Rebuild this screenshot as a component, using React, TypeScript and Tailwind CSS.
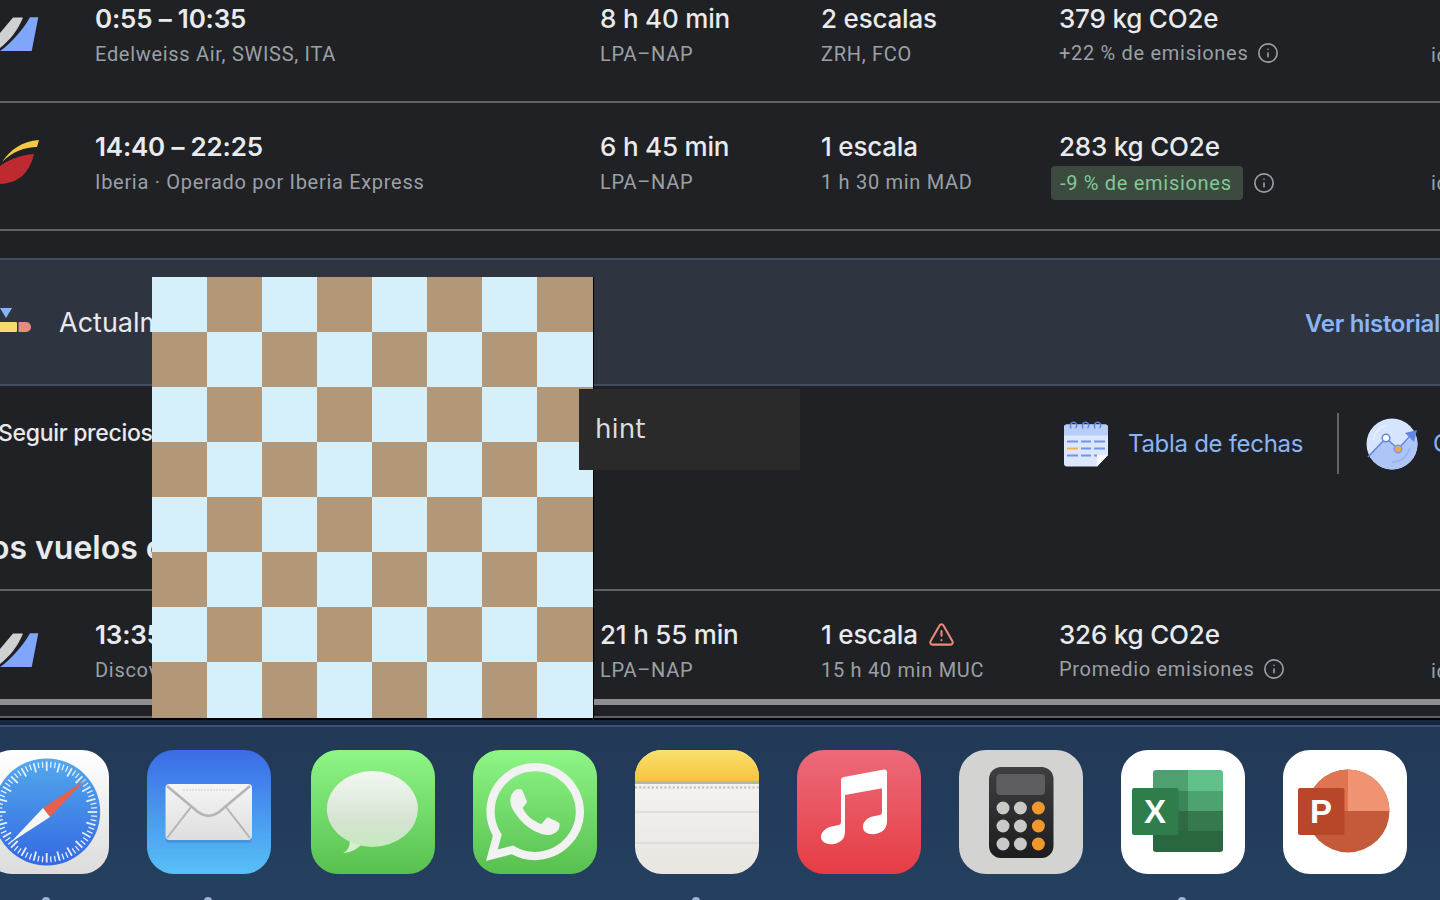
import React from "react";
import { Info, TriangleAlert } from "lucide-react";
import { FaWhatsapp } from "react-icons/fa";

const Tail = () => (
  <svg viewBox="0 0 40 50" className="mt-[9px] block h-[50px] w-[40px]">
    <path d="M30 7.3L38.3 7.3L31.7 41L0 41C12 33 24 18 30 7.3Z" fill="#7fa6fb" />
    <path d="M13 7.5L23 7.5C18 20 10 30 0 38L0 23Z" fill="#cfd0d2" />
  </svg>
);

const Iberia = () => (
  <svg viewBox="0 0 40 50" className="mt-[9px] block h-[50px] w-[40px]">
    <path d="M39 2L37 9C25 9 12 14 2 24C10 12 22 3 39 2Z" fill="#f6c945" />
    <path d="M34 16C20 17 8 22 0 28L0 46C18 45 29 36 34 16Z" fill="#bd2b30" />
  </svg>
);

const big = "font-['Inter',sans-serif] text-[26px] font-medium leading-[35px] h-[35px] tracking-[-0.2px] text-[#e8eaed] whitespace-nowrap";
const smallBase = "font-['Roboto',sans-serif] text-[20px] tracking-[0.7px] whitespace-nowrap";
const small = `${smallBase} leading-[36px] h-[36px] text-[#9aa0a6]`;

type RowProps = {
  logo: React.ReactNode;
  time: string;
  airline: string;
  dur: string;
  stops: string;
  warn?: boolean;
  detail: string;
  co2: string;
  emission: React.ReactNode;
  className: string;
};

const Row = ({ logo, time, airline, dur, stops, warn, detail, co2, emission, className }: RowProps) => (
  <div className={`grid shrink-0 grid-cols-[95px_505px_221px_238px_372px_9px] overflow-hidden pt-[26px] ${className}`}>
    <div>{logo}</div>
    <div>
      <div className={`${big} font-semibold`}>{time}</div>
      <div className={small}>{airline}</div>
    </div>
    <div>
      <div className={big}>{dur}</div>
      <div className={small}>LPA–NAP</div>
    </div>
    <div>
      <div className={`${big} flex items-center gap-[10px]`}>
        {stops}
        {warn && <TriangleAlert size={27} strokeWidth={1.8} className="text-[#e98b7e]" />}
      </div>
      <div className={small}>{detail}</div>
    </div>
    <div>
      <div className={big}>{co2}</div>
      {emission}
    </div>
    <div className={`${small} mt-[36px]`}>ida y vuelta</div>
  </div>
);

const InfoIcon = () => <Info size={22} strokeWidth={1.8} className="shrink-0 text-[#9aa0a6]" />;

const Safari = () => {
  const ticks = Array.from({ length: 72 }, (_, i) => i * 5);
  return (
    <svg viewBox="0 0 124 124" className="h-full w-full">
      <defs>
        <linearGradient id="sf" x1="0" y1="0" x2="0" y2="1">
          <stop offset="0" stopColor="#ffffff" />
          <stop offset="1" stopColor="#dcdcdc" />
        </linearGradient>
        <linearGradient id="sfb" x1="0" y1="0" x2="0" y2="1">
          <stop offset="0" stopColor="#52a9ec" />
          <stop offset="1" stopColor="#3468e2" />
        </linearGradient>
      </defs>
      <rect width="124" height="124" rx="27" fill="url(#sf)" />
      <circle cx="61.7" cy="62" r="53.5" fill="url(#sfb)" />
      {ticks.map((a) => (
        <line
          key={a}
          x1="61.7"
          y1="11.5"
          x2="61.7"
          y2={a % 15 === 0 ? "21" : "17.5"}
          stroke="#e3eefc"
          strokeWidth={a % 15 === 0 ? 1.8 : 1.3}
          transform={`rotate(${a} 61.7 62)`}
        />
      ))}
      <path d="M100 30L58 58L65 67Z" fill="#e8604c" />
      <path d="M25 93L58 58L65 67Z" fill="#f6f6f6" />
    </svg>
  );
};

const Mail = () => (
  <svg viewBox="0 0 124 124" className="h-full w-full">
    <defs>
      <linearGradient id="ml" x1="0" y1="0" x2="0" y2="1">
        <stop offset="0" stopColor="#3a6ce6" />
        <stop offset="1" stopColor="#58c0f7" />
      </linearGradient>
      <linearGradient id="me" x1="0" y1="0" x2="0" y2="1">
        <stop offset="0" stopColor="#f5f5f5" />
        <stop offset="1" stopColor="#dedede" />
      </linearGradient>
    </defs>
    <rect width="124" height="124" rx="27" fill="url(#ml)" />
    <rect x="18.5" y="36" width="86.5" height="57" rx="4" fill="#3b7bc4" opacity="0.45" />
    <rect x="18.5" y="34" width="86.5" height="56" rx="4" fill="url(#me)" />
    <path d="M20 36L51 62C58 67 65 67 72 62L103 36" fill="none" stroke="#b4b4b4" strokeWidth="2.6" />
    <path d="M44 57L20 88M79 57L103 88" fill="none" stroke="#b4b4b4" strokeWidth="2" />
    <line x1="36" y1="40" x2="88" y2="40" stroke="#cfcfcf" strokeWidth="1.2" strokeDasharray="2 1" />
  </svg>
);

const Messages = () => (
  <svg viewBox="0 0 124 124" className="h-full w-full">
    <defs>
      <linearGradient id="gr" x1="0" y1="0" x2="0" y2="1">
        <stop offset="0" stopColor="#8df686" />
        <stop offset="1" stopColor="#58c04f" />
      </linearGradient>
      <linearGradient id="bb" x1="0" y1="0" x2="0" y2="1">
        <stop offset="0" stopColor="#f4f7f2" />
        <stop offset="0.7" stopColor="#d3e3cf" />
        <stop offset="1" stopColor="#c5eabd" />
      </linearGradient>
    </defs>
    <rect width="124" height="124" rx="27" fill="url(#gr)" />
    <path d="M32 103C38 100 40 94 38 87L50 95C45 100 38 103 32 103Z" fill="#d5efcf" />
    <ellipse cx="61.4" cy="59" rx="45.5" ry="38" fill="url(#bb)" />
  </svg>
);

const WhatsApp = () => (
  <div className="flex h-full w-full items-center justify-center rounded-[27px] bg-linear-to-b from-[#8df686] to-[#58c04f]">
    <FaWhatsapp size={112} className="text-[#f2f2f2]" />
  </div>
);

const Notes = () => (
  <svg viewBox="0 0 124 124" className="h-full w-full">
    <defs>
      <linearGradient id="ny" x1="0" y1="0" x2="0" y2="1">
        <stop offset="0" stopColor="#fbdf70" />
        <stop offset="1" stopColor="#f6c53c" />
      </linearGradient>
      <linearGradient id="np" x1="0" y1="0" x2="0" y2="1">
        <stop offset="0" stopColor="#f8f7f5" />
        <stop offset="1" stopColor="#e7e5e0" />
      </linearGradient>
      <clipPath id="nc">
        <rect width="124" height="124" rx="27" />
      </clipPath>
    </defs>
    <g clipPath="url(#nc)">
      <rect width="124" height="124" fill="url(#np)" />
      <rect width="124" height="31" fill="url(#ny)" />
      <rect y="31" width="124" height="3" fill="#b5b3ad" />
      <line x1="0" y1="37.5" x2="124" y2="37.5" stroke="#b9b9b6" strokeWidth="2" strokeDasharray="2 2.2" />
      <rect y="61.5" width="124" height="1" fill="#d1d0d0" />
      <rect y="92.5" width="124" height="1" fill="#d1d0d0" />
    </g>
  </svg>
);

const Music = () => (
  <svg viewBox="0 0 124 124" className="h-full w-full">
    <defs>
      <linearGradient id="mu" x1="0" y1="0" x2="0" y2="1">
        <stop offset="0" stopColor="#ec6a7a" />
        <stop offset="1" stopColor="#e63d45" />
      </linearGradient>
    </defs>
    <rect width="124" height="124" rx="27" fill="url(#mu)" />
    <path
      d="M44 30Q44 27.5 47 27L87 19.5Q90 19 90 22L90 71C90 80 84 83 78 84C71 85 66 82 66 77C66 71 71 67 78 66L83 65Q85 64.5 85 62L85 38.3L48 45L48 81C48 90 43 92.5 37 94C30 95 24 92 24 87C24 81 30 77 37 76L42 75Q44 74.5 44 72Z"
      fill="#ffffff"
    />
  </svg>
);

const Calc = () => (
  <svg viewBox="0 0 124 124" className="h-full w-full">
    <defs>
      <linearGradient id="cb" x1="0" y1="0" x2="0" y2="1">
        <stop offset="0" stopColor="#3f3f41" />
        <stop offset="1" stopColor="#1d1d1f" />
      </linearGradient>
    </defs>
    <rect width="124" height="124" rx="27" fill="#d3d3d1" />
    <rect x="30" y="17" width="64.5" height="91" rx="12" fill="url(#cb)" />
    <rect x="37.4" y="24" width="48.6" height="21" rx="4" fill="#5d5e60" />
    {[58, 76, 94].map((y) => (
      <g key={y}>
        <circle cx="44" cy={y} r="6.5" fill="#c9c9c7" />
        <circle cx="61.4" cy={y} r="6.5" fill="#c9c9c7" />
        <circle cx="79.4" cy={y} r="6.5" fill="#f0982e" />
      </g>
    ))}
  </svg>
);

const Excel = () => (
  <svg viewBox="0 0 124 124" className="h-full w-full">
    <defs>
      <clipPath id="xc">
        <rect x="32" y="20" width="70" height="82" rx="3" />
      </clipPath>
    </defs>
    <rect width="124" height="124" rx="27" fill="#ffffff" />
    <g clipPath="url(#xc)">
      <rect x="32" y="20" width="35" height="21" fill="#4ea070" />
      <rect x="67" y="20" width="35" height="21" fill="#62c08a" />
      <rect x="32" y="41" width="35" height="20" fill="#3c8558" />
      <rect x="67" y="41" width="35" height="20" fill="#4da36f" />
      <rect x="32" y="61" width="35" height="20" fill="#2f6a45" />
      <rect x="67" y="61" width="35" height="20" fill="#37794f" />
      <rect x="32" y="81" width="70" height="21" fill="#2a6640" />
    </g>
    <rect x="11" y="38" width="46.5" height="47" rx="2" fill="#2f7d4a" />
    <text x="34" y="73" textAnchor="middle" fontFamily="Liberation Sans, sans-serif" fontWeight="700" fontSize="33" fill="#ffffff">X</text>
  </svg>
);

const Ppt = () => (
  <svg viewBox="0 0 124 124" className="h-full w-full">
    <rect width="124" height="124" rx="27" fill="#ffffff" />
    <circle cx="65" cy="61" r="41.5" fill="#c45a3a" />
    <path d="M65 19.5A41.5 41.5 0 0 0 23.5 61L65 61Z" fill="#de7450" />
    <path d="M65 19.5A41.5 41.5 0 0 1 106.5 61L65 61Z" fill="#f09372" />
    <rect x="15" y="38" width="46.5" height="47" rx="2" fill="#b8472a" />
    <text x="38" y="73" textAnchor="middle" fontFamily="Liberation Sans, sans-serif" fontWeight="700" fontSize="33" fill="#ffffff">P</text>
  </svg>
);

const Calendar = () => (
  <svg viewBox="0 0 44 46" className="mt-[2px] h-[46px] w-[44px] shrink-0">
    <path d="M3 3.5H41Q44 3.5 44 6.5V34L33 45.5H3Q0 45.5 0 42.5V6.5Q0 3.5 3 3.5Z" fill="#dde7fb" />
    <path d="M0 14.5V6.5Q0 3.5 3 3.5H41Q44 3.5 44 6.5V14.5Z" fill="#b9cef7" />
    <path d="M33 45.5V34H44Z" fill="#f6f8fe" />
    <g fill="none" stroke="#5f86e6" strokeWidth="1.4">
      <path d="M7 7.5C5 3 8 0.7 10.5 1.3C13 2 13.5 5 11.5 7" />
      <path d="M19 7.5C17 3 20 0.7 22.5 1.3C25 2 25.5 5 23.5 7" />
      <path d="M31 7.5C29 3 32 0.7 34.5 1.3C37 2 37.5 5 35.5 7" />
    </g>
    <path d="M3 20.5H14M17 20.5H27M30 20.5H41M17 27.5H27M30 27.5H41M3 34.5H14M17 34.5H27M30 34.5H33" stroke="#6f94ee" strokeWidth="1.8" />
    <path d="M3 27.5H14" stroke="#f0b23e" strokeWidth="1.8" />
  </svg>
);

const Chart = () => (
  <svg viewBox="0 0 52 52" className="h-[52px] w-[52px] shrink-0">
    <defs>
      <clipPath id="cc">
        <circle cx="26" cy="26" r="25.5" />
      </clipPath>
    </defs>
    <circle cx="26" cy="26" r="25.5" fill="#d6e4fd" />
    <path d="M0 40L20 20L32 31L52 13V52H0Z" fill="#aec6f7" clipPath="url(#cc)" />
    <path d="M2 39L20 20L32 31L47 15" fill="none" stroke="#5f86e6" strokeWidth="1.6" />
    <path d="M51 12L39 15L48 24Z" fill="#5f86e6" />
    <circle cx="20" cy="20" r="3.8" fill="#ffffff" stroke="#5f86e6" strokeWidth="1.5" />
    <circle cx="32" cy="31" r="3.8" fill="#f0a93a" stroke="#7a9bef" strokeWidth="1.5" />
    <path d="M26 44C35 44 41 38 44 30" fill="none" stroke="#8fb0f4" strokeWidth="1.3" />
    <path d="M7 22C9 14 14 9 21 7" fill="none" stroke="#eef4ff" strokeWidth="1.3" />
  </svg>
);

const BannerIcon = () => (
  <svg viewBox="0 0 31 24" className="-mt-[4px] h-[24px] w-[31px] shrink-0">
    <path d="M0 0H12L6 10Z" fill="#8ab4f8" />
    <rect x="-4" y="14" width="21" height="10" rx="1" fill="#fbd971" />
    <path d="M18.5 14H26A5 5 0 0 1 26 24H18.5Z" fill="#e78a80" />
  </svg>
);

type DockItem = { key: string; el: React.ReactNode; dot?: boolean; extra?: string };
const dock: DockItem[] = [
  { key: "safari", el: <Safari />, dot: true },
  { key: "mail", el: <Mail />, dot: true },
  { key: "messages", el: <Messages />, extra: "ml-[2px]" },
  { key: "whatsapp", el: <WhatsApp /> },
  { key: "notes", el: <Notes />, dot: true },
  { key: "music", el: <Music /> },
  { key: "calc", el: <Calc /> },
  { key: "excel", el: <Excel />, dot: true },
  { key: "ppt", el: <Ppt /> },
];

const cells = Array.from({ length: 64 }, (_, i) => i);

export default function App() {
  return (
    <div className="relative flex h-[900px] w-[1440px] flex-col overflow-hidden bg-[#202124]">
      <Row
        className="-mt-[25px] h-[128px] border-b-2 border-[#5f6368]"
        logo={<Tail />}
        time="0:55 – 10:35"
        airline="Edelweiss Air, SWISS, ITA"
        dur="8 h 40 min"
        stops="2 escalas"
        detail="ZRH, FCO"
        co2="379 kg CO2e"
        emission={
          <div className={`${small} -mt-[1px] flex items-center gap-[9px]`}>
            +22 % de emisiones
            <InfoIcon />
          </div>
        }
      />
      <Row
        className="h-[128px] border-b-2 border-[#5f6368]"
        logo={<Iberia />}
        time="14:40 – 22:25"
        airline="Iberia · Operado por Iberia Express"
        dur="6 h 45 min"
        stops="1 escala"
        detail="1 h 30 min MAD"
        co2="283 kg CO2e"
        emission={
          <div className="-ml-[8px] mt-[2px] flex items-center gap-[10px]">
            <span className={`${smallBase} flex h-[34px] w-[192px] items-center rounded-[4px] bg-[#3c4a40] pl-[9px] leading-[34px] text-[#81c995]`}>-9 % de emisiones</span>
            <InfoIcon />
          </div>
        }
      />
      <div className="h-[27px] shrink-0" />
      <div className="flex h-[128px] shrink-0 items-center border-y-2 border-[#434c60] bg-[#2f3441]">
        <BannerIcon />
        <div className="ml-[28px] mt-[2px] w-[1246px] shrink-0 whitespace-nowrap font-['Inter',sans-serif] text-[27px] text-[#e8eaed]">Actualmente los precios son normales</div>
        <div className="mt-[3px] shrink-0 whitespace-nowrap font-['Inter',sans-serif] text-[24px] font-semibold tracking-[-0.3px] text-[#8ab4f8]">Ver historial de precios</div>
      </div>
      <div className="flex h-[114px] shrink-0 items-center">
        <div className="-mt-[20px] -ml-[2px] w-[1066px] shrink-0 whitespace-nowrap font-['Inter',sans-serif] text-[23px] font-medium tracking-[-0.3px] text-[#e8eaed]">Seguir precios</div>
        <Calendar />
        <div className="ml-[20px] mt-[2px] w-[209px] shrink-0 whitespace-nowrap font-['Inter',sans-serif] text-[24px] tracking-[-0.3px] text-[#8ab4f8]">Tabla de fechas</div>
        <div className="h-[61px] w-[2px] shrink-0 bg-[#5f6368]" />
        <div className="ml-[27px] mt-[2px] shrink-0">
          <Chart />
        </div>
        <div className="ml-[15px] mt-[2px] shrink-0 whitespace-nowrap font-['Inter',sans-serif] text-[24px] tracking-[-0.3px] text-[#8ab4f8]">Gráfico de precios</div>
      </div>
      <div className="flex h-[91px] shrink-0 items-start overflow-hidden border-b-2 border-[#5f6368]">
        <div className="-ml-[58px] mt-[27px] whitespace-nowrap font-['Inter',sans-serif] text-[32px] font-semibold leading-[42px] text-[#e8eaed]">Otros vuelos con escalas</div>
      </div>
      <Row
        className="h-[108px]"
        logo={<Tail />}
        time="13:35 – 11:30"
        airline="Discover Airlines, Lufthansa"
        dur="21 h 55 min"
        stops="1 escala"
        warn
        detail="15 h 40 min MUC"
        co2="326 kg CO2e"
        emission={
          <div className={`${small} -mt-[1px] flex items-center gap-[9px]`}>
            Promedio emisiones
            <InfoIcon />
          </div>
        }
      />
      <div className="h-[6px] shrink-0 bg-[#8f8f8f]" />
      <div className="h-[13px] shrink-0 border-b-2 border-[#5f6368]" />
      <div className="h-[2px] shrink-0 bg-black" />
      <div className="h-[5px] shrink-0 bg-[#16263e]" />
      <div className="flex min-h-0 flex-1 gap-[38px] border-t-2 border-[#3d5270] bg-linear-to-b from-[#223857] to-[#25405f] pt-[23px]">
        {dock.map((d, i) => (
          <div key={d.key} className={`relative h-[124px] w-[124px] shrink-0 ${i === 0 ? "-ml-[15px]" : ""} ${d.extra ?? ""}`}>
            {d.el}
            {d.dot && <div className="absolute left-[57px] top-[147px] h-[8px] w-[8px] rounded-full bg-[#9db4d6]" />}
          </div>
        ))}
      </div>

      <div className="absolute left-[152px] top-[277px] grid h-[442px] w-[442px] grid-cols-[repeat(7,55px)_56px] grid-rows-[repeat(7,55px)_56px] border-b border-r border-black">
        {cells.map((i) => {
          const light = (Math.floor(i / 8) + (i % 8)) % 2 === 0;
          return <div key={i} className={light ? "bg-[#d5f0fa]" : "bg-[#b29878]"} />;
        })}
      </div>
      <div className="absolute left-[579px] top-[389px] flex h-[81px] w-[221px] items-center bg-[#2a2a2a] pl-[16px] font-['DejaVu_Sans',sans-serif] text-[26px] text-[#dddddd]">hint</div>
    </div>
  );
}
